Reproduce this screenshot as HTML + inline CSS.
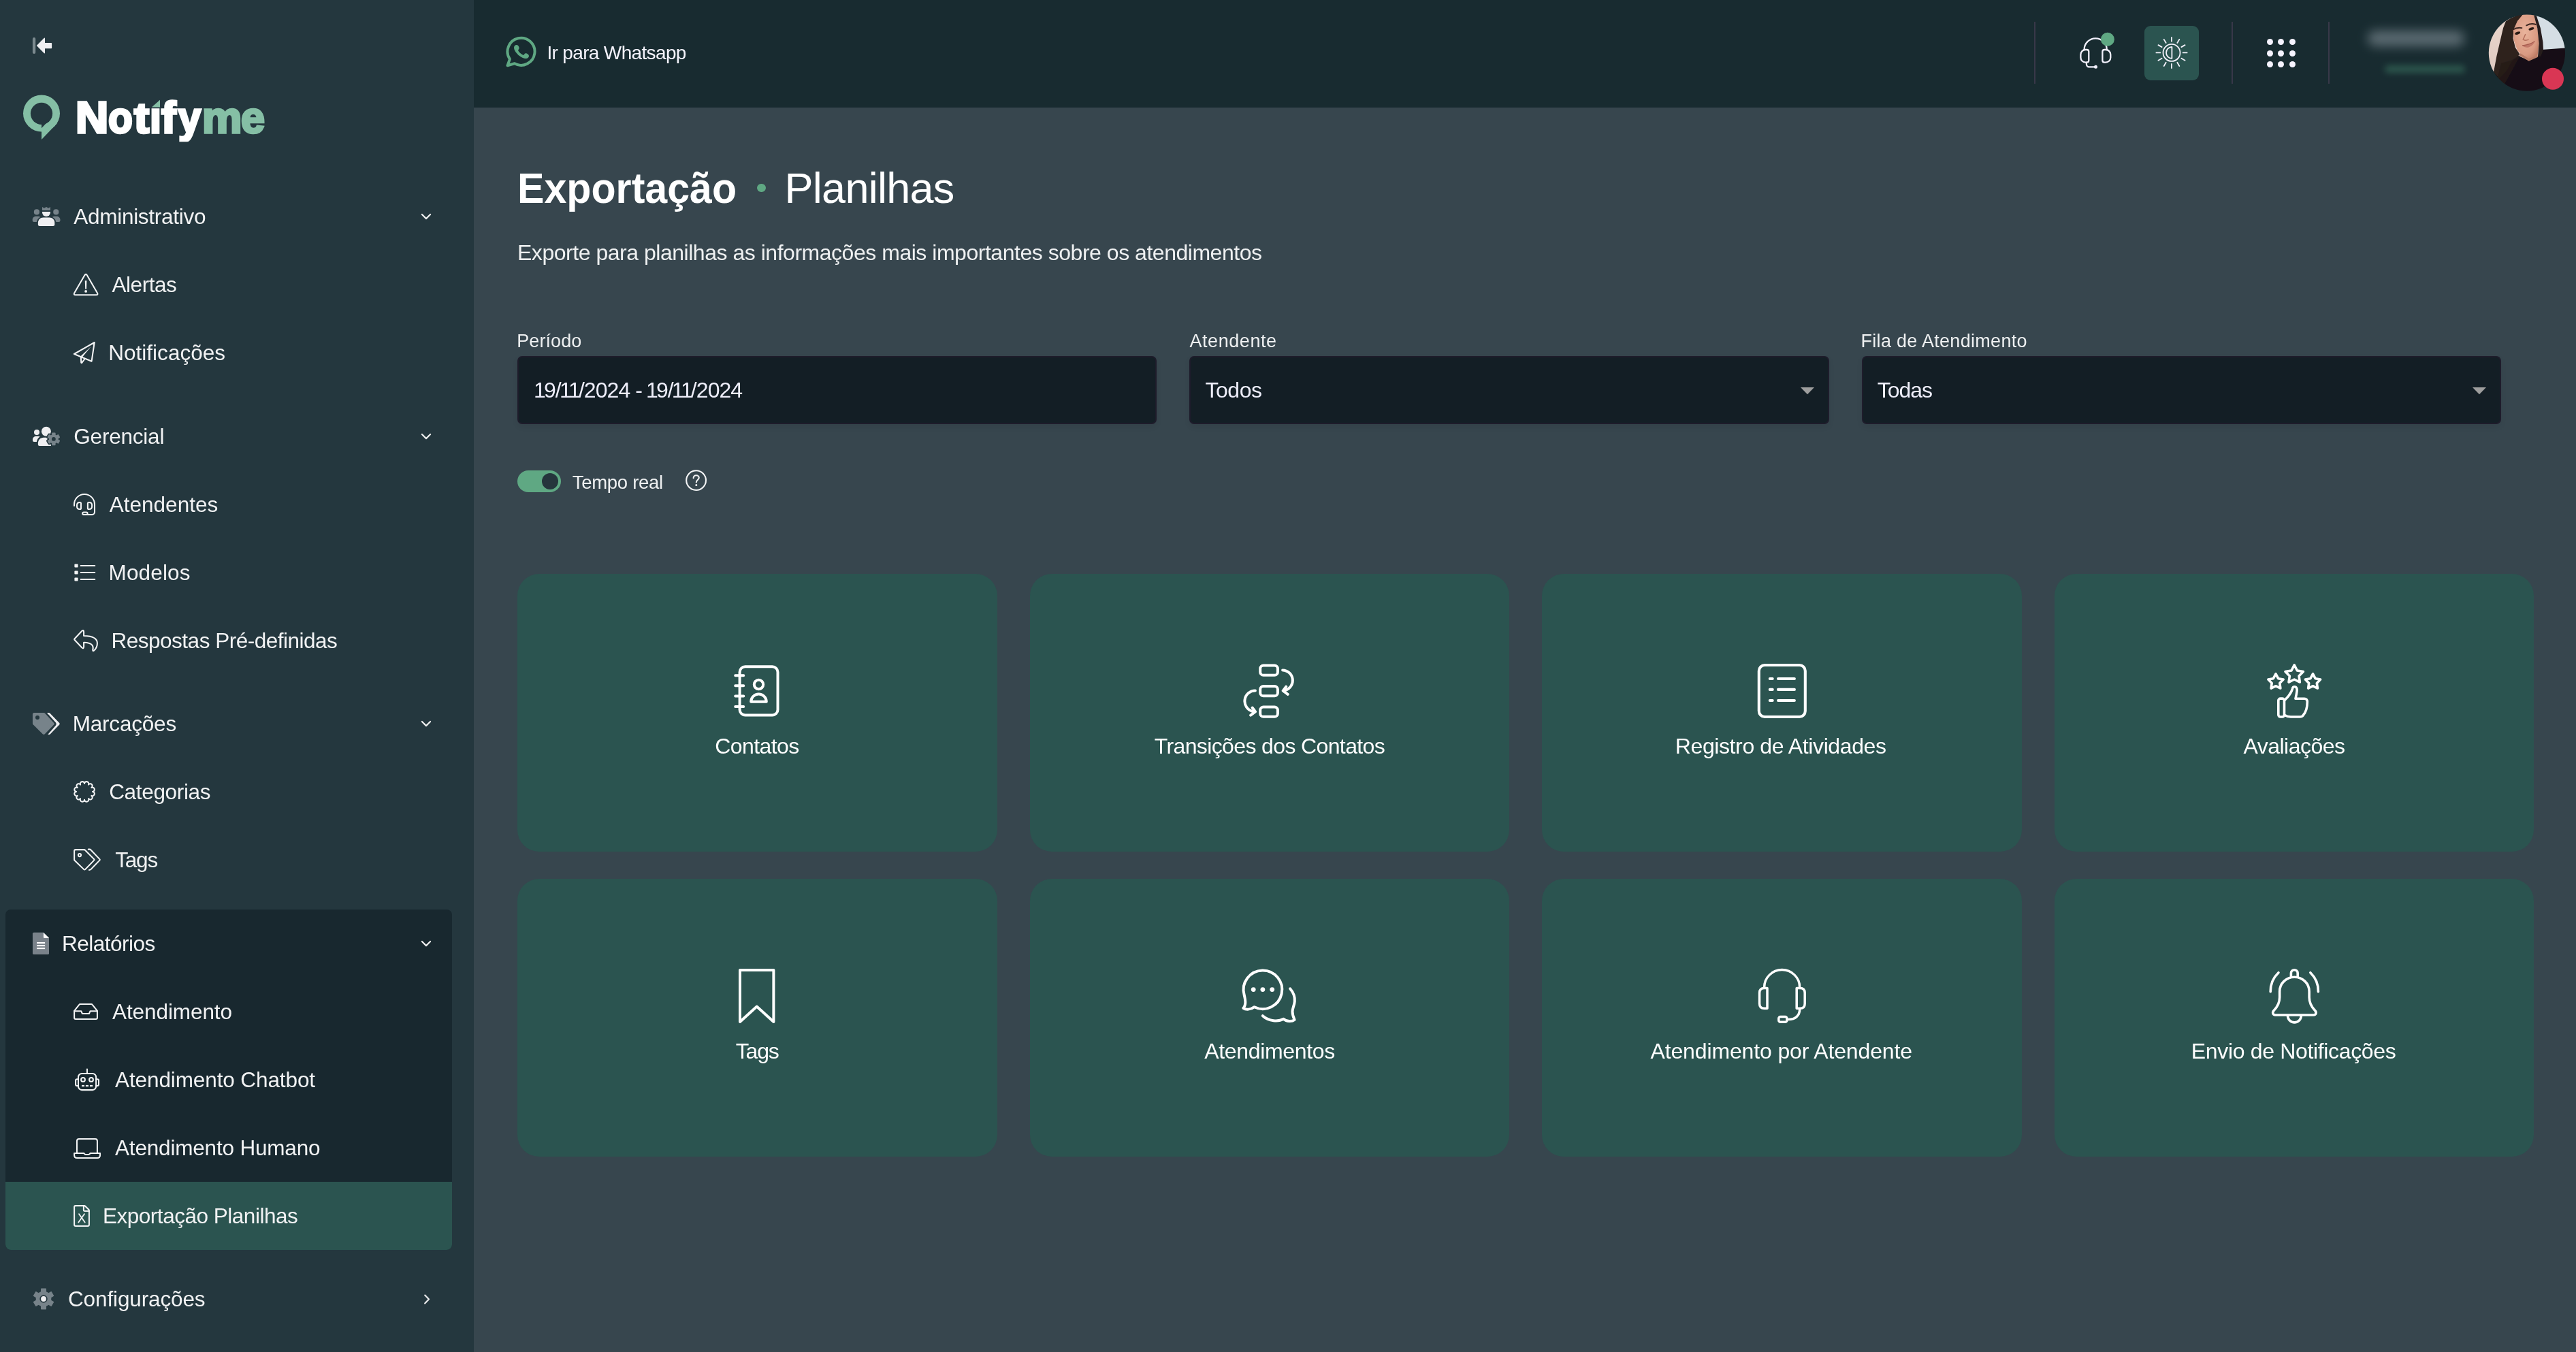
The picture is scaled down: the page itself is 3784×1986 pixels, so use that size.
<!DOCTYPE html><html><head><meta charset="utf-8"><title>Notifyme</title><style>
html,body{margin:0;padding:0}
body{width:3784px;height:1986px;position:relative;overflow:hidden;background:#37464e;font-family:"Liberation Sans",sans-serif;}
.b{position:absolute;}
.t{position:absolute;white-space:nowrap;line-height:1;font-family:"Liberation Sans",sans-serif;}
#txt{position:absolute;left:0;top:0;width:3784px;height:1986px;will-change:transform;}
svg{position:absolute;overflow:visible}
.card{position:absolute;background:#2b5450;border-radius:32px;width:704.5px;height:408px}
.inp{position:absolute;background:#131e25;border-radius:7px;box-sizing:border-box;border:2px solid #1e1c2b;height:100px;top:523px;box-shadow:0 4px 8px rgba(0,0,0,.07)}

</style></head><body>
<aside>
<div class="b" style="left:0;top:0;width:696px;height:1986px;background:#24373e"></div>
<div class="b" style="left:8px;top:1336px;width:656px;height:500px;border-radius:8px;background:#18282f;overflow:hidden"><div class="b" style="left:0;top:400px;width:656px;height:100px;background:#2b5450"></div></div>
<svg style="left:40px;top:50px" width="44" height="34" viewBox="0 0 44 34"><rect x="7.9" y="5" width="4.3" height="24" rx="2.1" fill="#7b898e"/><path d="M13.8 17 L24.6 5.9 Q26 4.9 26 6.6 V12.9 H35.3 Q36.1 12.9 36.1 13.7 V20.4 Q36.1 21.2 35.3 21.2 H26 V27.4 Q26 29.1 24.6 28.1 Z" fill="#efeff2"/></svg>
<svg style="left:30px;top:135px" width="62" height="75" viewBox="0 0 62 75"><circle cx="31" cy="31.5" r="27" fill="#85bfa5"/><path d="M31 52 V70 L54 46 Z" fill="#85bfa5"/><circle cx="31" cy="31.8" r="16.1" fill="#24373e"/><path d="M31 44 V53.2 L46.5 37 Z" fill="#24373e"/></svg>
<svg style="left:40px;top:296px" width="60" height="44" viewBox="0 0 60 44"><path d="M22 7.9 L24.8 9.7 L28 7.9 L31.2 9.7 L34 7.9 V13 H22 Z" fill="#77838a"/><path d="M22 14.9 H34 V15.9 A6 6 0 0 1 22 15.9 Z" fill="#efeff1"/><path d="M18 36 Q15.9 36 15.9 33.9 V31.2 C15.9 27 19.3 23.6 23.5 23.6 H32.6 C36.8 23.6 40.3 27 40.3 31.2 V33.9 Q40.3 36 38.2 36 Z" fill="#efeff1"/><circle cx="13.9" cy="15.4" r="4.1" fill="#77838a"/><circle cx="42.3" cy="15.4" r="4.1" fill="#77838a"/><path d="M9.8 30 Q7.7 30 7.7 27.9 V26.8 C7.7 24 10 21.8 12.8 21.8 H16.2 C17.3 21.8 18.3 22.1 19.2 22.7 C16.3 24.3 14.3 26.9 13.9 30 Z" fill="#77838a"/><path d="M46.4 30 Q48.5 30 48.5 27.9 V26.8 C48.5 24 46.2 21.8 43.4 21.8 H40 C38.9 21.8 37.9 22.1 37 22.7 C39.9 24.3 41.9 26.9 42.3 30 Z" fill="#77838a"/></svg>
<svg style="left:40px;top:616px" width="60" height="50" viewBox="0 0 60 50"><circle cx="14" cy="18.9" r="4" fill="#efeff1"/><path d="M9.9 32.9 Q7.95 32.9 7.95 30.9 V30 C7.95 27 10.3 24.8 13.3 24.8 H16 C17 24.8 17.9 25.1 18.6 25.6 C15.9 27.3 14.2 30 13.9 32.9 Z" fill="#efeff1"/><circle cx="27.9" cy="17.8" r="7" fill="#efeff1"/><path d="M17.9 39 Q15.9 39 15.9 37 V34.8 C15.9 30.4 19.5 26.8 23.9 26.8 H31.9 C33 26.8 34 27 35 27.4 V39 Z" fill="#efeff1"/><circle cx="38.85" cy="28.9" r="6.9" fill="#24373e" stroke="#24373e" stroke-width="3.2" stroke-linejoin="round"/><rect x="36.15" y="19.50" width="5.4" height="4.50" rx="0.8" fill="#24373e" stroke="#24373e" stroke-width="3.2" stroke-linejoin="round" transform="rotate(0.0 38.85 28.9)"/><rect x="36.15" y="19.50" width="5.4" height="4.50" rx="0.8" fill="#24373e" stroke="#24373e" stroke-width="3.2" stroke-linejoin="round" transform="rotate(60.0 38.85 28.9)"/><rect x="36.15" y="19.50" width="5.4" height="4.50" rx="0.8" fill="#24373e" stroke="#24373e" stroke-width="3.2" stroke-linejoin="round" transform="rotate(120.0 38.85 28.9)"/><rect x="36.15" y="19.50" width="5.4" height="4.50" rx="0.8" fill="#24373e" stroke="#24373e" stroke-width="3.2" stroke-linejoin="round" transform="rotate(180.0 38.85 28.9)"/><rect x="36.15" y="19.50" width="5.4" height="4.50" rx="0.8" fill="#24373e" stroke="#24373e" stroke-width="3.2" stroke-linejoin="round" transform="rotate(240.0 38.85 28.9)"/><rect x="36.15" y="19.50" width="5.4" height="4.50" rx="0.8" fill="#24373e" stroke="#24373e" stroke-width="3.2" stroke-linejoin="round" transform="rotate(300.0 38.85 28.9)"/><circle cx="38.85" cy="28.9" r="6.9" fill="#77838a"/><rect x="36.15" y="19.50" width="5.4" height="4.50" rx="0.8" fill="#77838a" transform="rotate(0.0 38.85 28.9)"/><rect x="36.15" y="19.50" width="5.4" height="4.50" rx="0.8" fill="#77838a" transform="rotate(60.0 38.85 28.9)"/><rect x="36.15" y="19.50" width="5.4" height="4.50" rx="0.8" fill="#77838a" transform="rotate(120.0 38.85 28.9)"/><rect x="36.15" y="19.50" width="5.4" height="4.50" rx="0.8" fill="#77838a" transform="rotate(180.0 38.85 28.9)"/><rect x="36.15" y="19.50" width="5.4" height="4.50" rx="0.8" fill="#77838a" transform="rotate(240.0 38.85 28.9)"/><rect x="36.15" y="19.50" width="5.4" height="4.50" rx="0.8" fill="#77838a" transform="rotate(300.0 38.85 28.9)"/><circle cx="38.85" cy="28.9" r="2.9" fill="#24373e"/></svg>
<svg style="left:40px;top:1038px" width="60" height="50" viewBox="0 0 60 50"><path d="M10 8.9 H24.4 Q25.2 8.9 25.8 9.5 L39.2 23.9 Q40.4 25.2 39.2 26.5 L25.8 40.2 Q24.2 41.6 22.7 40.2 L8.6 26.2 Q7.95 25.5 7.95 24.7 V10.9 Q7.95 8.9 10 8.9 Z" fill="#77838a"/><circle cx="15" cy="15.9" r="3" fill="#24373e"/><path d="M28.9 8.9 H31.8 Q32.6 8.9 33.2 9.5 L47.2 23.9 Q48.4 25.2 47.2 26.5 L33.6 40.4 Q32.9 41.1 32 41.1 H30.2 L42 27.4 Q43.6 25.4 42 23.5 Z" fill="#efeff1"/></svg>
<svg style="left:40px;top:1360px" width="60" height="50" viewBox="0 0 60 50"><path d="M9.6 9.8 H24.2 L32 17.6 V40.4 Q32 42 30.4 42 H9.6 Q7.95 42 7.95 40.4 V11.4 Q7.95 9.8 9.6 9.8 Z" fill="#79828a"/><path d="M23.9 10 L32 18.1 H25.4 Q23.9 18.1 23.9 16.6 Z" fill="#ffffff"/><rect x="14.1" y="24" width="12" height="2.1" fill="#fff"/><rect x="14.1" y="28" width="12" height="2.1" fill="#fff"/><rect x="14.1" y="32" width="12" height="2.1" fill="#fff"/></svg>
<svg style="left:40px;top:1883px" width="60" height="50" viewBox="0 0 60 50"><circle cx="24" cy="25" r="11.3" fill="#77838a"/><rect x="20.00" y="9.50" width="8" height="6.20" rx="0.8" fill="#77838a" transform="rotate(0.0 24 25)"/><rect x="20.00" y="9.50" width="8" height="6.20" rx="0.8" fill="#77838a" transform="rotate(60.0 24 25)"/><rect x="20.00" y="9.50" width="8" height="6.20" rx="0.8" fill="#77838a" transform="rotate(120.0 24 25)"/><rect x="20.00" y="9.50" width="8" height="6.20" rx="0.8" fill="#77838a" transform="rotate(180.0 24 25)"/><rect x="20.00" y="9.50" width="8" height="6.20" rx="0.8" fill="#77838a" transform="rotate(240.0 24 25)"/><rect x="20.00" y="9.50" width="8" height="6.20" rx="0.8" fill="#77838a" transform="rotate(300.0 24 25)"/><circle cx="24" cy="25" r="5.7" fill="#24373e"/><circle cx="24" cy="25" r="3.9" fill="#efeff1"/></svg>
<svg style="left:614.5px;top:308.2px" width="24" height="20" viewBox="0 0 24 20"><g fill="none" stroke="#eceded" stroke-width="2.2" stroke-linecap="round" stroke-linejoin="round" ><path d="M4.9 7 L11 13.1 L17.1 7"/></g></svg>
<svg style="left:614.5px;top:631.3px" width="24" height="20" viewBox="0 0 24 20"><g fill="none" stroke="#eceded" stroke-width="2.2" stroke-linecap="round" stroke-linejoin="round" ><path d="M4.9 7 L11 13.1 L17.1 7"/></g></svg>
<svg style="left:614.5px;top:1053.4px" width="24" height="20" viewBox="0 0 24 20"><g fill="none" stroke="#eceded" stroke-width="2.2" stroke-linecap="round" stroke-linejoin="round" ><path d="M4.9 7 L11 13.1 L17.1 7"/></g></svg>
<svg style="left:614.5px;top:1376px" width="24" height="20" viewBox="0 0 24 20"><g fill="none" stroke="#eceded" stroke-width="2.2" stroke-linecap="round" stroke-linejoin="round" ><path d="M4.9 7 L11 13.1 L17.1 7"/></g></svg>
<svg style="left:615px;top:1898px" width="24" height="22" viewBox="0 0 24 22"><g fill="none" stroke="#e9eaec" stroke-width="2.2" stroke-linecap="round" stroke-linejoin="round" ><path d="M9.2 4.6 L15 10.6 L9.2 16.6"/></g></svg>
<svg style="left:100px;top:395px" width="60" height="50" viewBox="0 0 60 50"><g fill="none" stroke="#f3f4f5" stroke-width="2.05" stroke-linecap="round" stroke-linejoin="round" ><path d="M24.36 9.32 L9.3 35.28 Q7.6 38.2 11 38.2 L41.2 38.2 Q44.6 38.2 42.9 35.28 L27.84 9.32 Q26.1 6.4 24.36 9.32 Z"/></g><path d="M24.8 17.2 H27.4 L27 29.8 H25.2 Z" fill="#f3f4f5"/><circle cx="26.1" cy="32.9" r="1.9" fill="#f3f4f5"/></svg>
<svg style="left:100px;top:495px" width="60" height="50" viewBox="0 0 60 50"><g fill="none" stroke="#f3f4f5" stroke-width="2.05" stroke-linecap="round" stroke-linejoin="round" ><path d="M38.7 8 L8.9 25 L34.6 35.7 Z"/><path d="M18.9 29.2 L19.2 37.3 Q19.5 38.8 20.6 37.5 L24.6 32"/></g><path d="M18.2 28.4 L20.8 29.7 L33.7 14.1 Z" fill="#f3f4f5"/></svg>
<svg style="left:100px;top:715px" width="60" height="50" viewBox="0 0 60 50"><g fill="none" stroke="#f3f4f5" stroke-width="2.05" stroke-linecap="round" stroke-linejoin="round" ><path d="M9 27.9 V26 A15 15 0 0 1 39 26 V37 A3.9 3.9 0 0 1 35.1 40.9 H28.6"/><path d="M17.4 22.9 H17.2 Q13 22.9 13 27.099999999999998 V28.8 Q13 33 17.2 33 H17.4 Q19 33 19 31.4 V24.5 Q19 22.9 17.4 22.9 Z"/><path d="M30.5 22.9 H30.900000000000002 Q35.1 22.9 35.1 27.099999999999998 V28.8 Q35.1 33 30.900000000000002 33 H30.5 Q28.9 33 28.9 31.4 V24.5 Q28.9 22.9 30.5 22.9 Z"/><rect x="21.2" y="37.4" width="7.4" height="3.5" rx="1.75"/></g></svg>
<svg style="left:100px;top:815px" width="60" height="50" viewBox="0 0 60 50"><rect x="9.4" y="13.5" width="5.2" height="5" rx="1" fill="#f3f4f5"/><rect x="17.9" y="14.9" width="22.2" height="2.2" rx="0.4" fill="#f3f4f5"/><rect x="9.4" y="23.5" width="5.2" height="5" rx="1" fill="#f3f4f5"/><rect x="17.9" y="24.9" width="22.2" height="2.2" rx="0.4" fill="#f3f4f5"/><rect x="9.4" y="33.5" width="5.2" height="5" rx="1" fill="#f3f4f5"/><rect x="17.9" y="34.9" width="22.2" height="2.2" rx="0.4" fill="#f3f4f5"/></svg>
<svg style="left:100px;top:915px" width="60" height="50" viewBox="0 0 60 50"><g fill="none" stroke="#f3f4f5" stroke-width="2.05" stroke-linecap="round" stroke-linejoin="round" ><path d="M9.6 23.2 L20.2 12 Q22.9 9.6 23.1 13 L23.1 18.9 C30 19 42.9 20.5 42.9 29.8 C42.9 34.5 40.5 38.5 38.2 40.6 Q36.3 42.3 36.2 39.8 C37.5 35 37 29.2 23.1 28.8 L23.1 35.3 Q22.9 38.6 20.2 36.3 L9.6 25 Q8.7 24.1 9.6 23.2 Z"/></g></svg>
<svg style="left:100px;top:1137px" width="60" height="50" viewBox="0 0 60 50"><g fill="none" stroke="#f3f4f5" stroke-width="2.05" stroke-linecap="round" stroke-linejoin="round" ><path d="M24.05 14.00 A3.13 3.13 0 1 1 30.00 15.59 A3.13 3.13 0 1 1 34.36 19.95 A3.13 3.13 0 1 1 35.95 25.90 A3.13 3.13 0 1 1 34.36 31.85 A3.13 3.13 0 1 1 30.00 36.21 A3.13 3.13 0 1 1 24.05 37.80 A3.13 3.13 0 1 1 18.10 36.21 A3.13 3.13 0 1 1 13.74 31.85 A3.13 3.13 0 1 1 12.15 25.90 A3.13 3.13 0 1 1 13.74 19.95 A3.13 3.13 0 1 1 18.10 15.59 A3.13 3.13 0 1 1 24.05 14.00 Z"/></g></svg>
<svg style="left:100px;top:1237px" width="60" height="50" viewBox="0 0 60 50"><g fill="none" stroke="#f3f4f5" stroke-width="2.05" stroke-linecap="round" stroke-linejoin="round" ><path d="M11.1 11.1 H23.6 Q24.4 11.1 25 11.7 L38 24.9 Q39 25.9 38 26.9 L25.4 39.9 Q24.2 41.1 23 39.9 L9.7 27.1 Q9.1 26.5 9.1 25.7 V13.1 Q9.1 11.1 11.1 11.1 Z"/><path d="M29.8 10.6 H31.8 Q32.6 10.6 33.2 11.2 L46.2 24.9 Q47.2 25.9 46.2 26.9 L33.4 40.1 Q32.6 40.9 31 40.9"/><circle cx="17" cy="19.05" r="2.1"/></g></svg>
<svg style="left:100px;top:1460px" width="60" height="50" viewBox="0 0 60 50"><g fill="none" stroke="#f3f4f5" stroke-width="2.05" stroke-linecap="round" stroke-linejoin="round" ><path d="M17.6 15 H34.1 Q35.1 15 35.7 15.8 L42.9 24.8 V35 Q42.9 37 40.9 37 H11.1 Q9.1 37 9.1 35 V24.8 L16.3 15.8 Q16.9 15 17.6 15 Z"/><path d="M9.1 25.2 H19.2 L20.9 29 H30.9 L32.6 25.2 H42.9"/></g></svg>
<svg style="left:100px;top:1560px" width="60" height="50" viewBox="0 0 60 50"><g fill="none" stroke="#f3f4f5" stroke-width="2.05" stroke-linecap="round" stroke-linejoin="round" ><rect x="15" y="17" width="26.1" height="24.1" rx="5.2"/><path d="M27.95 10.4 V17"/><path d="M15 25.2 H13.1 Q11.1 25.2 11.1 27.2 V33 Q11.1 35 13.1 35 H15"/><path d="M41.1 25.2 H43 Q45 25.2 45 27.2 V33 Q45 35 43 35 H41.1"/><circle cx="22" cy="25.9" r="2.9"/><circle cx="34" cy="25.9" r="2.9"/></g><rect x="20" y="33.9" width="4" height="2.2" fill="#f3f4f5"/><rect x="25.9" y="33.9" width="4.1" height="2.2" fill="#f3f4f5"/><rect x="32" y="33.9" width="4.1" height="2.2" fill="#f3f4f5"/></svg>
<svg style="left:100px;top:1660px" width="60" height="50" viewBox="0 0 60 50"><g fill="none" stroke="#f3f4f5" stroke-width="2.05" stroke-linecap="round" stroke-linejoin="round" ><path d="M13 33.9 V15.9 Q13 12.9 16 12.9 H39.9 Q42.9 12.9 42.9 15.9 V33.9"/><path d="M9.1 33.9 H23.3 Q24 35.9 25.9 35.9 H30 Q31.9 35.9 32.6 33.9 H47 V36.9 Q47 40.9 43 40.9 H13.1 Q9.1 40.9 9.1 36.9 Z"/></g></svg>
<svg style="left:100px;top:1760px" width="60" height="50" viewBox="0 0 60 50"><g fill="none" stroke="#f3f4f5" stroke-width="2.05" stroke-linecap="round" stroke-linejoin="round" ><path d="M11.1 11.1 H23.8 Q24.6 11.1 25.2 11.7 L30.3 16.8 Q30.9 17.4 30.9 18.2 V38.9 Q30.9 40.9 28.9 40.9 H11.1 Q9.1 40.9 9.1 38.9 V13.1 Q9.1 11.1 11.1 11.1 Z"/><path d="M22.9 11.1 V17.5 Q22.9 19.05 24.5 19.05 H30.9"/></g><g fill="none" stroke="#f3f4f5" stroke-width="1.8" stroke-linecap="round" stroke-linejoin="round" ><path d="M16 23.2 L24.7 35.6 M24 23.2 L15.3 35.6"/></g></svg>
</aside>
<header>
<div class="b" style="left:696px;top:0;width:3088px;height:158px;background:#182b30"></div>
<div class="b" style="left:2988px;top:32px;width:2px;height:91px;background:#383849"></div>
<div class="b" style="left:3278px;top:32px;width:2px;height:91px;background:#383849"></div>
<div class="b" style="left:3420px;top:32px;width:2px;height:91px;background:#383849"></div>
<div class="b" style="left:3150px;top:38px;width:80px;height:80px;border-radius:9px;background:#2b5450"></div>
<div class="b" style="left:3329.5px;top:56.7px;width:9px;height:9px;border-radius:50%;background:#f6f4ff"></div>
<div class="b" style="left:3329.5px;top:73.5px;width:9px;height:9px;border-radius:50%;background:#f6f4ff"></div>
<div class="b" style="left:3329.5px;top:90.1px;width:9px;height:9px;border-radius:50%;background:#f6f4ff"></div>
<div class="b" style="left:3346.1px;top:56.7px;width:9px;height:9px;border-radius:50%;background:#f6f4ff"></div>
<div class="b" style="left:3346.1px;top:73.5px;width:9px;height:9px;border-radius:50%;background:#f6f4ff"></div>
<div class="b" style="left:3346.1px;top:90.1px;width:9px;height:9px;border-radius:50%;background:#f6f4ff"></div>
<div class="b" style="left:3362.8px;top:56.7px;width:9px;height:9px;border-radius:50%;background:#f6f4ff"></div>
<div class="b" style="left:3362.8px;top:73.5px;width:9px;height:9px;border-radius:50%;background:#f6f4ff"></div>
<div class="b" style="left:3362.8px;top:90.1px;width:9px;height:9px;border-radius:50%;background:#f6f4ff"></div>
<svg style="left:730px;top:40px" width="80" height="70" viewBox="0 0 80 70"><path d="M25.9 53.3 A20 20 0 1 0 18.9 46.9 L15.5 56.2 Z" fill="none" stroke="#5fa883" stroke-width="4" stroke-linejoin="round"/><path d="M28.7 25.9 C31 25.9 32.8 28.5 32.6 31 C32.5 32.3 31 33.2 31.2 34.2 C32.5 37 36 40 38.8 40.9 C39.8 41 40.3 38.4 42 38.2 C44.3 38.2 47.1 40.3 47 42.3 C46.9 44.5 44.8 46 42.5 46 C37 46 29 40.5 25.6 32.9 C24 29 25.8 25.9 28.7 25.9 Z" fill="#5fa883"/></svg>
<svg style="left:3040px;top:35px" width="80" height="80" viewBox="0 0 80 80"><g fill="none" stroke="#f1effb" stroke-width="2.3" stroke-linecap="round" stroke-linejoin="round" ><path d="M21.6 37.9 A16.6 16.6 0 0 1 54.8 37.9"/><path d="M25.4 38 H23.5 C19.5 38 16.4 41.2 16.4 45.2 V49.4 C16.4 53.4 19.5 56.6 23.5 56.6 H25.4 C27 56.6 28.3 55.3 28.3 53.7 V40.9 C28.3 39.3 27 38 25.4 38 Z"/><path d="M51.3 38 H53.2 C57.2 38 60.3 41.2 60.3 45.2 V49.4 C60.3 53.4 57.2 56.6 53.2 56.6 H51.3 C49.7 56.6 48.4 55.3 48.4 53.7 V40.9 C48.4 39.3 49.7 38 51.3 38 Z"/><path d="M24.9 56.6 V59.3 C24.9 61.5 26.7 63.3 28.9 63.3 H37.5"/></g><circle cx="38.5" cy="63.3" r="2.5" fill="#f1effb"/><circle cx="55.9" cy="22.8" r="10" fill="#5fa883"/></svg>
<svg style="left:3140px;top:28px" width="100" height="100" viewBox="0 0 100 100"><g fill="none" stroke="#f3f1fb" stroke-width="1.8" stroke-linecap="round" stroke-linejoin="round" ><circle cx="50" cy="49.4" r="12.5"/><path d="M50.4 41 A8.4 8.4 0 0 0 50.4 57.8 Z"/><path d="M50.00 32.80 L50.00 26.80"/><path d="M58.30 35.02 L61.30 29.83"/><path d="M64.38 41.10 L69.57 38.10"/><path d="M66.60 49.40 L72.60 49.40"/><path d="M64.38 57.70 L69.57 60.70"/><path d="M58.30 63.78 L61.30 68.97"/><path d="M50.00 66.00 L50.00 72.00"/><path d="M41.70 63.78 L38.70 68.97"/><path d="M35.62 57.70 L30.43 60.70"/><path d="M33.40 49.40 L27.40 49.40"/><path d="M35.62 41.10 L30.43 38.10"/><path d="M41.70 35.02 L38.70 29.83"/></g></svg>
<div class="b" style="left:3478px;top:45px;width:142px;height:23px;border-radius:11px;background:#74828a;filter:blur(8px);opacity:.72"></div>
<div class="b" style="left:3503px;top:96px;width:118px;height:11px;border-radius:6px;background:#3a7460;filter:blur(5px);opacity:.6"></div>
<svg style="left:3640px;top:10px" width="144" height="140" viewBox="0 0 144 140"><defs><clipPath id="avc"><circle cx="71.9" cy="67.7" r="56.1"/></clipPath><filter id="avb" x="-10%" y="-10%" width="120%" height="120%"><feGaussianBlur stdDeviation="0.7"/></filter><linearGradient id="avbg" x1="0" y1="0" x2="0" y2="1"><stop offset="0" stop-color="#ecd9cf"/><stop offset="1" stop-color="#d9c2b9"/></linearGradient><radialGradient id="avf" cx="0.45" cy="0.4" r="0.7"><stop offset="0" stop-color="#e9b39b"/><stop offset="0.7" stop-color="#d99a82"/><stop offset="1" stop-color="#b9765f"/></radialGradient></defs><g clip-path="url(#avc)"><g filter="url(#avb)"><rect x="0" y="0" width="144" height="140" fill="url(#avbg)"/><polygon points="82.8,8.3 136.6,8.3 136.6,65.2 93.7,63.4" fill="#d5dee4"/><polygon points="93.7,63.1 128.4,60.4 137.7,61.1 137.7,130.4 8.3,130.4 23.3,95.8 34.2,82.8 58.0,71.4 72.5,77.8 88.0,73.0" fill="#121013"/><polygon points="40.9,21.2 48.7,16.6 58.0,12.2 66.8,10.4 59.0,20.7 52.3,34.2 51.6,46.6 54.9,60.0 61.3,69.6 58.5,73.0 49.7,79.7 42.4,93.2 31.1,105.1 23.0,96.1 27.4,72.5 32.9,48.7 37.1,31.1" fill="#2d221f"/><polygon points="58.0,20.7 66.8,10.4 82.0,11.7 87.2,31.1 89.6,53.8 87.6,71.6 74.7,77.8 66.3,72.5 58.2,64.4 52.5,48.7 51.9,34.2" fill="url(#avf)"/><polygon points="62.1,68.3 74.5,76.1 87.6,71.6 88.2,73.7 74.7,79.7 60.6,71.4" fill="#b97c66"/><polygon points="80.7,11.2 86.1,13.8 91.8,31.1 95.4,51.8 96.0,62.7 92.3,72.7 88.0,73.2 89.6,53.8 87.2,31.1 82.0,11.7" fill="#261c1a"/><polygon points="34.2,82.8 48.7,78.7 58.5,73.0 62.1,71.4 58.0,78.7 44.5,103.5 34.2,122.2 25.9,113.9" fill="#241b19" opacity="0.85"/><ellipse cx="58.2" cy="38.6" rx="4.1" ry="1.9" fill="#2a1a17" transform="rotate(-19 58.2 38.6)"/><ellipse cx="78.4" cy="32.3" rx="4.1" ry="1.9" fill="#2a1a17" transform="rotate(-19 78.4 32.3)"/><path d="M51.0 33.6 Q57.5 29.8 64.4 31.1" stroke="#3a2620" stroke-width="1.9" fill="none" stroke-linecap="round"/><path d="M71.2 27.3 Q78.5 23.4 84.7 25.9" stroke="#3a2620" stroke-width="1.9" fill="none" stroke-linecap="round"/><path d="M69.6 40.6 Q67.8 45.5 66.3 47.8 Q69.4 50.2 74.0 48.4" stroke="#b46f5c" stroke-width="1.5" fill="none" stroke-linecap="round"/><path d="M65.0 56.7 Q72.5 54.7 76.8 53.6 Q80.2 51.8 83.6 50.5 Q81.8 56.4 74.5 59.5 Q68.3 60.6 65.0 56.7 Z" fill="#c27868"/><path d="M65.0 56.7 Q74.5 56.7 83.6 50.5" stroke="#9c5348" stroke-width="0.9" fill="none"/></g></g><circle cx="110" cy="105.8" r="16" fill="#d93654"/></svg>
</header>
<main>
<div class="card" style="left:760px;top:843px"></div>
<div class="card" style="left:1512.5px;top:843px"></div>
<div class="card" style="left:2265px;top:843px"></div>
<div class="card" style="left:3017.5px;top:843px"></div>
<div class="card" style="left:760px;top:1291px"></div>
<div class="card" style="left:1512.5px;top:1291px"></div>
<div class="card" style="left:2265px;top:1291px"></div>
<div class="card" style="left:3017.5px;top:1291px"></div>
<div class="inp" style="left:760px;width:939px"></div>
<div class="inp" style="left:1747px;width:940px"></div>
<div class="inp" style="left:2735px;width:939px"></div>
<svg style="left:2644.9px;top:568.9px" width="20" height="10" viewBox="0 0 20 10"><path d="M0 0H20L10 10.2Z" fill="#9e9e9e"/></svg>
<svg style="left:3631.9px;top:568.9px" width="20" height="10" viewBox="0 0 20 10"><path d="M0 0H20L10 10.2Z" fill="#9e9e9e"/></svg>
<div class="b" style="left:760px;top:691px;width:64px;height:32px;border-radius:16px;background:#5fa883"></div>
<div class="b" style="left:796px;top:695px;width:24px;height:24px;border-radius:12px;background:#25353c"></div>
<div class="b" style="left:1112px;top:269.5px;width:12.5px;height:12.5px;border-radius:50%;background:#5fa883"></div>
<svg style="left:1030px;top:950px" width="170" height="180" viewBox="0 0 170 180"><g fill="none" stroke="#ffffff" stroke-width="4" stroke-linecap="round" stroke-linejoin="round" ><rect x="56.6" y="29.3" width="55.9" height="71.2" rx="8"/><path d="M50.2 42.3 H62.2 M50.2 57.2 H62.2 M50.2 72.5 H62.2 M50.2 87.9 H62.2"/><circle cx="84.5" cy="55.5" r="6.7"/><path d="M73.2 80.8 A11.3 11.3 0 0 1 95.8 80.8 Z"/></g></svg>
<svg style="left:1804px;top:960px" width="120" height="110" viewBox="0 0 120 110"><g fill="none" stroke="#ffffff" stroke-width="4" stroke-linecap="round" stroke-linejoin="round" ><rect x="47.2" y="17.5" width="25.7" height="14.3" rx="4.6"/><rect x="47.2" y="48" width="25.7" height="14.3" rx="4.6"/><rect x="47.2" y="78.5" width="25.7" height="14.3" rx="4.6"/><path d="M80.1 24.4 A15.1 15.1 0 0 1 84 54"/><path d="M85.2 48.6 L80.7 54.7 L87.7 59.9"/><path d="M39.9 54.5 A15.5 15.5 0 0 0 36 85"/><path d="M35.6 79.5 L40.1 85.5 L33.1 90.6"/></g></svg>
<svg style="left:2557px;top:960px" width="120" height="110" viewBox="0 0 120 110"><g fill="none" stroke="#ffffff" stroke-width="4.1" stroke-linecap="round" stroke-linejoin="round" ><rect x="26.8" y="17.05" width="68" height="75.95" rx="8.5"/><path d="M42.8 37 H46.7 M55 37 H78.9 M42.8 52.9 H46.7 M55 52.9 H78.9 M42.8 69 H46.7 M55 69 H78.9"/></g></svg>
<svg style="left:3310px;top:960px" width="120" height="110" viewBox="0 0 120 110"><g fill="none" stroke="#ffffff" stroke-width="3.6" stroke-linecap="round" stroke-linejoin="round" ><polygon points="60.20,16.90 64.43,24.98 73.42,26.50 67.05,33.02 68.37,42.05 60.20,38.00 52.03,42.05 53.35,33.02 46.98,26.50 55.97,24.98"/><polygon points="33.00,29.90 36.59,36.66 44.13,37.98 38.80,43.49 39.88,51.07 33.00,47.70 26.12,51.07 27.20,43.49 21.87,37.98 29.41,36.66"/><polygon points="87.50,29.90 91.09,36.66 98.63,37.98 93.30,43.49 94.38,51.07 87.50,47.70 80.62,51.07 81.70,43.49 76.37,37.98 83.91,36.66"/><rect x="36.8" y="66.1" width="8.7" height="26.9" rx="3"/><path d="M46 68.5 C52 63 56 57 57.5 51.5 C58.2 48.6 59.5 48.8 60.6 48.8 C63.5 48.8 64.5 52 64 55.5 C63.6 59 62.8 62.5 62 66.2 H75 C78 66.2 79.3 68.5 79.3 71 C79.3 79 77.5 86 73 91 C72 92.4 70 93 68.5 93 H55 C51.5 93 48.5 92 46 90.5"/></g></svg>
<svg style="left:1052px;top:1408px" width="120" height="110" viewBox="0 0 120 110"><g fill="none" stroke="#ffffff" stroke-width="4" stroke-linecap="round" stroke-linejoin="round" ><path d="M35 16.9 H84.4 V93 L59.7 70.5 L35 93 Z"/></g></svg>
<svg style="left:1804px;top:1408px" width="120" height="110" viewBox="0 0 120 110"><g fill="none" stroke="#ffffff" stroke-width="4" stroke-linecap="round" stroke-linejoin="round" ><path d="M38.6 71.2 A28.3 28.3 0 1 0 23.6 53 C25 60 26.5 64 24.6 69 Q23.5 72 22.3 72.8 C26 75.5 33 75.5 38.6 71.2 Z"/><path d="M91.1 44.3 C96 50 98.3 57 97.8 63 C97.3 69 94.5 73 94.5 78 C94.5 83 96 86.5 97.6 90 C94 93 86 93 81.4 88.7 C74 93 60 92.5 50.85 84.2"/></g><circle cx="37.2" cy="45.6" r="3.4" fill="#ffffff"/><circle cx="50.85" cy="45.6" r="3.4" fill="#ffffff"/><circle cx="64.7" cy="45.6" r="3.4" fill="#ffffff"/></svg>
<svg style="left:2557px;top:1408px" width="120" height="110" viewBox="0 0 120 110"><g fill="none" stroke="#ffffff" stroke-width="3.5" stroke-linecap="round" stroke-linejoin="round" ><path d="M34.6 42.3 A26.05 25.7 0 0 1 86.7 42.3"/><path d="M39 43.6 H34.6 Q27.6 43.6 27.6 50.6 V66.2 Q27.6 73.2 34.6 73.2 H39 Z"/><path d="M82.2 43.6 H87.2 Q94.2 43.6 94.2 50.6 V66.2 Q94.2 73.2 87.2 73.2 H82.2 Z"/><path d="M86.7 74.5 C86.7 84 80 89.5 70 89.5"/><rect x="55.8" y="85.5" width="12.1" height="7.8" rx="2.6"/></g></svg>
<svg style="left:3310px;top:1408px" width="120" height="110" viewBox="0 0 120 110"><g fill="none" stroke="#ffffff" stroke-width="3.6" stroke-linecap="round" stroke-linejoin="round" ><path d="M38.65 57 V48.5 C38.65 36.5 48.3 27.3 60.4 27.3 C72.5 27.3 82.15 36.5 82.15 48.5 V57 C82.15 66 86 71.5 90.5 76.2 C93.5 79.3 92 83 88.5 83 H32.3 C28.8 83 27.3 79.3 30.3 76.2 C34.8 71.5 38.65 66 38.65 57 Z"/><path d="M55.4 26.5 V21.6 A4.9 4.9 0 0 1 65.2 21.6 V26.5"/><path d="M50.5 84 A9.9 9.9 0 0 0 70.3 84"/><path d="M37 20.7 A38 38 0 0 0 25.2 48.8"/><path d="M83.8 20.7 A38 38 0 0 1 95.4 48.8"/></g></svg>
<svg style="left:1002.1px;top:685.3px" width="42" height="42" viewBox="0 0 42 42"><g fill="none" stroke="#f3f4f5" stroke-width="2.1" stroke-linecap="round" stroke-linejoin="round" ><circle cx="20.6" cy="20.6" r="14.4"/><path d="M16.6 17.2 C16.6 14.6 18.4 13.2 20.7 13.2 C23 13.2 24.8 14.7 24.8 16.8 C24.8 19.6 20.8 20 20.8 23.4"/></g><circle cx="20.8" cy="27.4" r="1.5" fill="#f3f4f5"/></svg>
</main>
<div id="txt">
<div class="t" style="left:110.94px;top:140px;font-size:65px;font-weight:700;color:#ffffff;-webkit-text-stroke:3.6px #ffffff;transform-origin:0 0;transform:scaleX(1.0282);">N</div>
<div class="t" style="left:158.82px;top:140px;font-size:65px;font-weight:700;color:#ffffff;-webkit-text-stroke:3.6px #ffffff;transform-origin:0 0;transform:scaleX(0.9015);">o</div>
<div class="t" style="left:197.04px;top:140px;font-size:65px;font-weight:700;color:#ffffff;-webkit-text-stroke:3.6px #ffffff;transform-origin:0 0;transform:scaleX(1.0203);clip-path:inset(12.2px -20px -20px -20px);">t</div>
<div class="t" style="left:220.25px;top:140px;font-size:65px;font-weight:700;color:#ffffff;-webkit-text-stroke:3.6px #ffffff;transform-origin:0 0;transform:scaleX(0.9338);">ı</div>
<div class="t" style="left:237.09px;top:140px;font-size:65px;font-weight:700;color:#ffffff;-webkit-text-stroke:3.6px #ffffff;transform-origin:0 0;transform:scaleX(0.9919);">f</div>
<div class="t" style="left:261.85px;top:140px;font-size:65px;font-weight:700;color:#ffffff;-webkit-text-stroke:3.6px #ffffff;transform-origin:0 0;transform:scaleX(0.9141);clip-path:inset(-20px -20px -3.2px -20px);">y</div>
<div class="t" style="left:296.98px;top:140px;font-size:65px;font-weight:700;color:#85bfa5;-webkit-text-stroke:3.6px #85bfa5;transform-origin:0 0;transform:scaleX(1.0112);">m</div>
<div class="t" style="left:354.21px;top:140px;font-size:65px;font-weight:700;color:#85bfa5;-webkit-text-stroke:3.6px #85bfa5;transform-origin:0 0;transform:scaleX(0.9663);">e</div>
<svg style="left:222px;top:146px" width="14" height="13" viewBox="0 0 14 13"><path d="M13 0.8 V11.6 H0.8 Z" fill="#85bfa5"/></svg>
<div class="t" style="left:108.20px;top:303px;font-size:31.5px;letter-spacing:-0.269px;color:#f1f2f3">Administrativo</div>
<div class="t" style="left:164.50px;top:403px;font-size:31.5px;letter-spacing:-0.465px;color:#f1f2f3">Alertas</div>
<div class="t" style="left:159.20px;top:503px;font-size:31.5px;letter-spacing:0.025px;color:#f1f2f3">Notificações</div>
<div class="t" style="left:108.30px;top:626px;font-size:31.5px;letter-spacing:-0.214px;color:#f1f2f3">Gerencial</div>
<div class="t" style="left:160.70px;top:726px;font-size:31.5px;letter-spacing:0.019px;color:#f1f2f3">Atendentes</div>
<div class="t" style="left:159.50px;top:826px;font-size:31.5px;letter-spacing:0.148px;color:#f1f2f3">Modelos</div>
<div class="t" style="left:163.50px;top:926px;font-size:31.5px;letter-spacing:-0.492px;color:#f1f2f3">Respostas Pré-definidas</div>
<div class="t" style="left:106.70px;top:1048px;font-size:31.5px;letter-spacing:-0.201px;color:#f1f2f3">Marcações</div>
<div class="t" style="left:160.20px;top:1148px;font-size:31.5px;letter-spacing:-0.331px;color:#f1f2f3">Categorias</div>
<div class="t" style="left:169.30px;top:1248px;font-size:31.5px;letter-spacing:-1.229px;color:#f1f2f3">Tags</div>
<div class="t" style="left:90.90px;top:1371px;font-size:31.5px;letter-spacing:-0.485px;color:#f1f2f3">Relatórios</div>
<div class="t" style="left:165.00px;top:1471px;font-size:31.5px;letter-spacing:-0.085px;color:#f1f2f3">Atendimento</div>
<div class="t" style="left:169.00px;top:1571px;font-size:31.5px;letter-spacing:-0.105px;color:#f1f2f3">Atendimento Chatbot</div>
<div class="t" style="left:169.00px;top:1671px;font-size:31.5px;letter-spacing:-0.186px;color:#f1f2f3">Atendimento Humano</div>
<div class="t" style="left:151.00px;top:1771px;font-size:31.5px;letter-spacing:-0.483px;color:#f1f2f3">Exportação Planilhas</div>
<div class="t" style="left:100.00px;top:1893px;font-size:31.5px;letter-spacing:-0.131px;color:#f1f2f3">Configurações</div>
<div class="t" style="left:803.40px;top:64px;font-size:28px;letter-spacing:-0.653px;color:#f4f3fc">Ir para Whatsapp</div>
<div class="t" style="left:759.94px;top:245px;font-size:63px;font-weight:700;color:#ffffff;transform-origin:0 0;transform:scaleX(0.9389)">Exportação</div>
<div class="t" style="left:1152.60px;top:245px;font-size:63px;letter-spacing:-0.745px;color:#ffffff">Planilhas</div>
<div class="t" style="left:760.00px;top:355px;font-size:32px;letter-spacing:-0.473px;color:#eef0f1">Exporte para planilhas as informações mais importantes sobre os atendimentos</div>
<div class="t" style="left:759.20px;top:488px;font-size:27px;letter-spacing:0.092px;color:#eef0f1">Período</div>
<div class="t" style="left:1747.50px;top:488px;font-size:27px;letter-spacing:0.551px;color:#eef0f1">Atendente</div>
<div class="t" style="left:2733.50px;top:488px;font-size:27px;letter-spacing:0.299px;color:#eef0f1">Fila de Atendimento</div>
<div class="t" style="left:785.90px;top:557px;font-size:32px;font-kerning:none;letter-spacing:-0.952px;color:#eeeefa"><span style="margin:0 -1.9px">1</span>9/<span style="margin:0 -1.9px">1</span><span style="margin:0 -1.9px">1</span>/2024 - <span style="margin:0 -1.9px">1</span>9/<span style="margin:0 -1.9px">1</span><span style="margin:0 -1.9px">1</span>/2024</div>
<div class="t" style="left:1770.50px;top:557px;font-size:32px;letter-spacing:-0.473px;color:#eeeefa">Todos</div>
<div class="t" style="left:2757.70px;top:557px;font-size:32px;letter-spacing:-1.023px;color:#eeeefa">Todas</div>
<div class="t" style="left:840.80px;top:695px;font-size:27.5px;letter-spacing:-0.303px;color:#eef0f1">Tempo real</div>
<div class="t" style="left:1050.25px;top:1080px;font-size:32px;letter-spacing:-0.583px;color:#ffffff">Contatos</div>
<div class="t" style="left:1695.75px;top:1080px;font-size:32px;letter-spacing:-0.626px;color:#ffffff">Transições dos Contatos</div>
<div class="t" style="left:2460.75px;top:1080px;font-size:32px;letter-spacing:-0.389px;color:#ffffff">Registro de Atividades</div>
<div class="t" style="left:3295.55px;top:1080px;font-size:32px;letter-spacing:-0.530px;color:#ffffff">Avaliações</div>
<div class="t" style="left:1080.75px;top:1528px;font-size:32px;letter-spacing:-1.198px;color:#ffffff">Tags</div>
<div class="t" style="left:1769.25px;top:1528px;font-size:32px;letter-spacing:-0.334px;color:#ffffff">Atendimentos</div>
<div class="t" style="left:2424.50px;top:1528px;font-size:32px;letter-spacing:-0.138px;color:#ffffff">Atendimento por Atendente</div>
<div class="t" style="left:3218.75px;top:1528px;font-size:32px;letter-spacing:-0.336px;color:#ffffff">Envio de Notificações</div>
</div>
</body></html>
